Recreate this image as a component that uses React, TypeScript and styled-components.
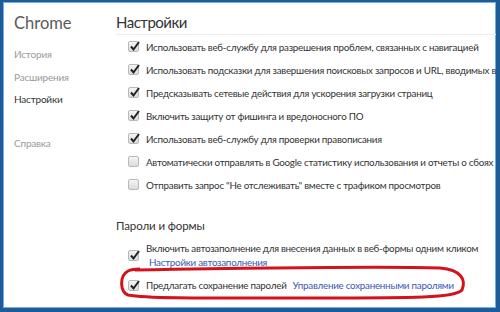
import * as React from 'react';
import styled, { createGlobalStyle } from 'styled-components';

const Global = createGlobalStyle`
  html, body {
    margin: 0;
    padding: 0;
    background: #fff;
  }
  body {
    font-family: Lato, Roboto, "Noto Sans", sans-serif;
  }
`;

const Frame = styled.div`
  position: relative;
  box-sizing: border-box;
  width: 500px;
  height: 312px;
  overflow: hidden;
  background: #fff;
  border-style: solid;
  border-color: #1d5c98;
  border-width: 2px 4px 4px 3px;
  box-shadow: inset 0 0 0 1px #6fb0e6;
  display: flex;
`;

const Sidebar = styled.nav`
  width: 113px;
  flex: none;
  padding: 11px 0 0 11px;
  box-sizing: border-box;
  display: flex;
  flex-direction: column;
`;

const Brand = styled.div`
  font-size: 16.5px;
  color: #5a5a5a;
  font-weight: 400;
  line-height: 20px;
  margin-bottom: 14px;
`;

const NavItem = styled.div<{ $active?: boolean; $gap?: number }>`
  font-size: 10px;
  letter-spacing: -0.2px;
  line-height: 14px;
  height: 22.5px;
  color: ${(p) => (p.$active ? '#333' : '#9a9a9a')};
  margin-top: ${(p) => p.$gap ?? 0}px;
`;

const Main = styled.main`
  flex: 1;
  min-width: 0;
  padding-top: 10px;
`;

const Heading = styled.h1`
  margin: 0;
  font-size: 15px;
  letter-spacing: -0.5px;
  font-weight: 400;
  color: #333;
  line-height: 20px;
  padding-bottom: 2px;
  border-bottom: 1px solid #eeeeee;
`;

const List = styled.div`
  padding: 0 0 0 12px;
  display: flex;
  flex-direction: column;
`;

const Row = styled.label`
  display: flex;
  align-items: center;
  height: 23px;
  white-space: nowrap;
  font-size: 9.8px;
  letter-spacing: -0.25px;
  color: #333;
`;

const Box = styled.span`
  position: relative;
  flex: none;
  width: 11px;
  height: 11px;
  box-sizing: border-box;
  border: 1px solid #b9b9b9;
  border-radius: 2px;
  background: linear-gradient(#f4f4f4, #dcdcdc);
  margin-right: 7px;
`;

const Tick = styled.svg`
  position: absolute;
  left: 0px;
  top: -2px;
`;

const Check = ({ checked }: { checked?: boolean }) => (
  <Box>
    {checked && (
      <Tick width="12" height="12" viewBox="0 0 12 12">
        <path d="M2 6.5 L4.5 9.5 L10 2" fill="none" stroke="#222" strokeWidth="2" />
      </Tick>
    )}
  </Box>
);

const SubHeading = styled.h2`
  margin: 22px 0 0;
  font-size: 11.5px;
  letter-spacing: -0.1px;
  font-weight: 400;
  color: #333;
  line-height: 16px;
`;

const Group = styled.div`
  padding: 5px 0 0 12px;
`;

const MultiRow = styled.div<{ $h: number }>`
  display: flex;
  align-items: center;
  white-space: nowrap;
  font-size: 9.8px;
  letter-spacing: -0.25px;
  color: #333;
  height: ${(p) => p.$h}px;
`;

const Stack = styled.div`
  display: flex;
  flex-direction: column;
  line-height: 14px;
`;

const Link = styled.span<{ $indent?: boolean }>`
  color: #3b58b5;
  margin-left: ${(p) => (p.$indent ? '3px' : '6px')};
`;

const Ellipse = styled.svg`
  position: absolute;
  left: -3px;
  top: -2px;
  pointer-events: none;
`;

export default function App() {
  const options = [
    { label: 'Использовать веб-службу для разрешения проблем, связанных с навигацией', checked: true },
    { label: 'Использовать подсказки для завершения поисковых запросов и URL, вводимых в адресную строку', checked: true },
    { label: 'Предсказывать сетевые действия для ускорения загрузки страниц', checked: true },
    { label: 'Включить защиту от фишинга и вредоносного ПО', checked: true },
    { label: 'Использовать веб-службу для проверки правописания', checked: true },
    { label: 'Автоматически отправлять в Google статистику использования и отчеты о сбоях', checked: false },
    { label: 'Отправить запрос "Не отслеживать" вместе с трафиком просмотров', checked: false },
  ];

  return (
    <>
      <Global />
      <Frame>
        <Sidebar>
          <Brand>Chrome</Brand>
          <NavItem>История</NavItem>
          <NavItem>Расширения</NavItem>
          <NavItem $active>Настройки</NavItem>
          <NavItem $gap={21}>Справка</NavItem>
        </Sidebar>
        <Main>
          <Heading>Настройки</Heading>
          <List>
            {options.map((o) => (
              <Row key={o.label}>
                <Check checked={o.checked} />
                {o.label}
              </Row>
            ))}
          </List>
          <SubHeading>Пароли и формы</SubHeading>
          <Group>
            <MultiRow $h={32}>
              <Check checked />
              <Stack>
                <span>Включить автозаполнение для внесения данных в веб-формы одним кликом</span>
                <Link $indent>Настройки автозаполнения</Link>
              </Stack>
            </MultiRow>
            <MultiRow $h={28}>
              <Check checked />
              <span>Предлагать сохранение паролей</span>
              <Link>Управление сохраненными паролями</Link>
            </MultiRow>
          </Group>
        </Main>
        <Ellipse width="500" height="312">
          <path
            d="M135 270 C 250 268, 380 266, 440 268 C 462 270, 466 280, 462 290 C 455 298, 420 298, 300 298 C 220 298, 150 299, 128 295 C 120 292, 119 276, 128 271 C 132 269, 136 269, 140 269"
            fill="none"
            stroke="#d3131c"
            strokeWidth="3"
          />
        </Ellipse>
      </Frame>
    </>
  );
}
